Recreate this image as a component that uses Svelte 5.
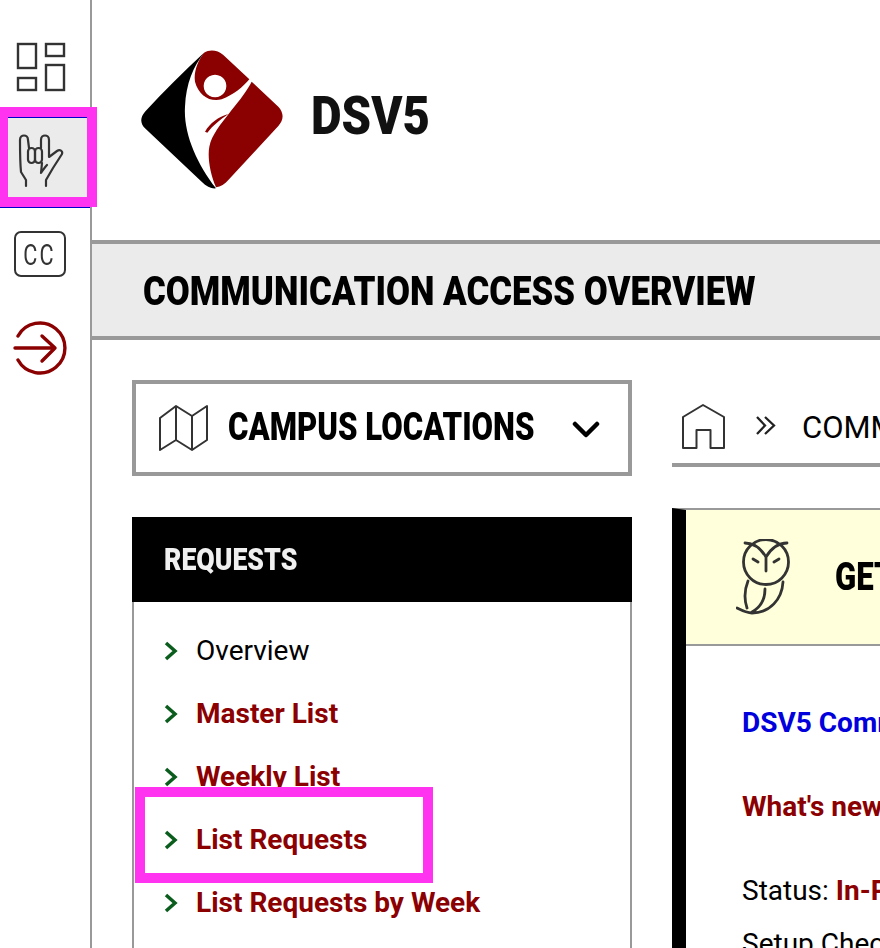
<script>
  const items = [
    { label: 'Overview', link: false },
    { label: 'Master List', link: true },
    { label: 'Weekly List', link: true },
    { label: 'List Requests', link: true, mark: true },
    { label: 'List Requests by Week', link: true },
  ];
</script>

<div class="page">
  <nav class="rail">
    <div class="rail-item first">
      <svg width="50" height="50" viewBox="0 0 50 50" fill="none" stroke="#333" stroke-width="2.400">
        <rect x="2" y="2" width="18" height="24"/><rect x="30" y="2" width="18" height="12"/>
        <rect x="2" y="36" width="18" height="12"/><rect x="30" y="23" width="18" height="25"/>
      </svg>
    </div>
    <div class="rail-item active">
      <svg width="50" height="60" viewBox="15 130 50 60" fill="none" stroke="#333" stroke-width="2.200" stroke-linecap="round" stroke-linejoin="round">
        <path d="M26 186v-6l-5-8c-1-10-1-22-1-32 0-6 8-6 8 0l1 8"/>
        <rect x="28" y="148" width="7" height="15" rx="3.500"/><rect x="35" y="148" width="7" height="15" rx="3.500"/>
        <path d="M41 148v-8c0-6 8-6 8 0v17l8-6c3-2 6 0 5 3l-9 14-7 12v6"/>
        <path d="M42 163l-1 10c2-3 4-6 6-8"/>
      </svg>
      <span class="mark rail-mark"></span>
    </div>
    <div class="rail-item cc">
      <div class="cc-box"><span class="cc-text">CC</span></div>
    </div>
    <div class="rail-item login">
      <svg width="56" height="56" viewBox="12 320 56 56" fill="none" stroke="#8b0000" stroke-width="3.400" stroke-linecap="round" stroke-linejoin="round">
        <path d="M18 336A25 25 0 1 1 18 360"/>
        <path d="M15 348h40M42 336l13 12-13 13"/>
      </svg>
    </div>
  </nav>

  <main class="main">
    <header class="brand">
      <svg class="logo" width="310" height="160" viewBox="0 0 930 480">
        <path fill="#000" d="M222 38C160 95 100 155 45 215c-15 17-15 35 0 50L215 425c15 15 30 22 43 20-58-75-98-165-93-245 3-70 25-120 57-162z"/>
        <path fill="#8b0000" fill-rule="evenodd" d="M222 38c18-10 40-8 58 7l78 73c-18 22-48 47-83 60-35 10-70-13-80-53-5-30 10-65 27-87zm33 66a34 34 0 1 0 .100 0z"/>
        <path fill="#8b0000" d="M365 125l80 75c17 18 17 40 0 58L295 420c-10 12-23 20-37 22-18-42-26-92-20-122 7-35 32-65 67-110 25-30 47-60 60-85z"/>
        <path fill="#8b0000" d="M225 275c15-25 40-45 70-53-25 18-45 33-63 56z"/>
      </svg>
      <span class="brand-name">DSV5</span>
    </header>

    <div class="title-bar"><h1>COMMUNICATION ACCESS OVERVIEW</h1></div>

    <div class="columns">
      <aside class="left">
        <div class="campus">
          <svg width="52" height="48" viewBox="0 0 52 48" fill="none" stroke="#333" stroke-width="2" stroke-linejoin="round">
            <path d="M2 14L18 2l16 10 15-10v34L34 46 18 36 2 46zM18 2v34M34 12v34"/>
          </svg>
          <span class="campus-label">CAMPUS LOCATIONS</span>
          <svg class="caret" width="28" height="18" viewBox="0 0 28 18" fill="none" stroke="#000" stroke-width="4.500" stroke-linecap="round" stroke-linejoin="round">
            <path d="M3 3l11 11L25 3"/>
          </svg>
        </div>
        <section class="panel">
          <h2><span>REQUESTS</span></h2>
          <ul>
            {#each items as item}
              <li class:link={item.link}>
                <svg width="16" height="20" viewBox="0 0 16 20" fill="none" stroke="#0b5d1e" stroke-width="3.500"><path d="M3 2l9 8-9 8"/></svg>
                <span>{item.label}</span>
                {#if item.mark}<span class="mark list-mark"></span>{/if}
              </li>
            {/each}
          </ul>
        </section>
      </aside>

      <section class="right">
        <div class="crumbs">
          <svg class="home" width="46" height="48" viewBox="680 403 46 48" fill="none" stroke="#333" stroke-width="2" stroke-linejoin="round">
            <path d="M683 418l20-12 21 12v31h-13.500v-18h-14v18H683z"/>
          </svg>
          <svg class="dbl" width="22" height="21" viewBox="755 415 22 21" fill="none" stroke="#222" stroke-width="2.300"><path d="M757 417l8 8.500-8 8.500M765 417l9 8.500-9 8.500"/></svg>
          <span class="crumb-text">COMMUNICATION ACCESS OVERVIEW</span>
        </div>
        <div class="card">
          <div class="card-head">
            <svg width="56" height="76" viewBox="736 540 56 76" fill="none" stroke="#333" stroke-width="2.800" stroke-linecap="round">
              <circle cx="766" cy="563" r="22.500"/>
              <path d="M745 544c7 0 15 4 21 14v14M787 544c-7 0-15 4-21 14M753 560l5 3M779 560l-5 3"/>
              <path d="M748 582c-4 10-4 18-1 27M765 590c0 10-4 18-13 23M783 583c-1 17-13 31-31 31-5 0-9-2-15-5"/>
            </svg>
            <span>GETTING STARTED</span>
          </div>
          <div class="card-body">
            <p class="blue">DSV5 Communication Access Guide</p>
            <p class="red">What's new in this release</p>
            <p class="status">Status: <b>In-Progress</b></p>
            <p class="plain">Setup Checklist</p>
          </div>
        </div>
      </section>
    </div>
  </main>
</div>

<style>
  :global(body) { margin: 0; background: #fff; }
  .page {
    display: flex; width: 880px; height: 948px; overflow: hidden;
    font-family: Roboto, sans-serif; color: #000;
  }
  svg { flex: none; display: block; }
  .rail { width: 90px; flex: none; border-right: 2px solid #999; }
  .rail-item { position: relative; display: flex; box-sizing: border-box; }
  .rail-item.first { height: 117px; padding: 42px 0 0 16px; }
  .rail-item.active {
    height: 91px; background: #ebebeb;
    border-top: 1px solid #00c; border-bottom: 1px solid #00c; padding: 12px 0 0 15px;
  }
  .mark { position: absolute; box-sizing: border-box; border-style: solid; border-color: #ff33f0; pointer-events: none; }
  .rail-mark { left: 0; top: -11px; width: 97px; height: 100px; border-width: 10px 10px 10px 8px; }
  .rail-item.cc { height: 92px; padding: 23px 0 0 14px; }
  .cc-box {
    width: 52px; height: 46px; box-sizing: border-box; border: 2px solid #333; border-radius: 7px;
    display: flex; align-items: center; justify-content: center;
  }
  .cc-text { font-size: 30px; color: #333; display: inline-block; transform: scaleX(.72); letter-spacing: 3px; }
  .rail-item.login { padding: 20px 0 0 12px; }

  .main { flex: 1; min-width: 0; }
  .brand { height: 240px; display: flex; align-items: flex-start; padding: 40px 0 0 38px; box-sizing: border-box; position: relative; }
  .brand .logo { filter: blur(.4px); }
  .brand-name {
    position: absolute; left: 219px; top: 84px; font-size: 54px; line-height: 64px; font-weight: 900; color: #111;
    display: inline-block; transform: scaleX(.875); transform-origin: left center; filter: blur(.4px);
  }
  .title-bar {
    height: 100px; box-sizing: border-box; background: #ebebeb;
    border-top: 4px solid #999; border-bottom: 4px solid #999;
    display: flex; align-items: center; padding-left: 51px;
  }
  h1 {
    margin: 2px 0 0; font-size: 40px; font-weight: 900; white-space: nowrap;
    transform: scaleX(.87); transform-origin: left center;
  }
  .columns { display: flex; gap: 40px; padding: 40px 0 0 40px; }
  .left { width: 500px; flex: none; }
  .campus {
    height: 96px; box-sizing: border-box; border: 4px solid #999;
    display: flex; align-items: center; padding-left: 22px; position: relative;
  }
  .campus-label {
    font-size: 38px; font-weight: 900; white-space: nowrap; margin-left: 18px; display: inline-block;
    transform: scaleX(.82); transform-origin: left center; line-height: 44px; margin-top: -2px;
  }
  .caret { position: absolute; right: 28px; top: 37px; }
  .panel { margin-top: 41px; border: 2px solid #999; border-top: 0; height: 500px; }
  h2 {
    margin: 0 -2px; height: 85px; background: #000; color: #f0f0f0; font-size: 31px; font-weight: 900;
    display: flex; align-items: center; padding-left: 32px;
  }
  h2 span { display: inline-block; transform: scaleX(.86); transform-origin: left center; }
  ul { list-style: none; margin: 0; padding: 17px 0 0 29px; }
  li {
    position: relative; height: 63px; display: flex; align-items: center; gap: 17px;
    font-size: 28px; white-space: nowrap;
  }
  li.link { color: #8b0000; font-weight: 700; }
  .list-mark { left: -28px; top: -21px; width: 298px; height: 96px; border-width: 10px; }

  .right { flex: 1; min-width: 0; }
  .crumbs {
    height: 87px; box-sizing: border-box; border-bottom: 4px solid #999;
    display: flex; align-items: center; padding: 8px 0 0 8px;
    font-size: 31px; white-space: nowrap; overflow: hidden;
  }
  .crumb-text { padding-top: 3px; }
  .dbl { margin: 0 25px 0 29px; }
  .card { margin-top: 41px; border-left: 14px solid #000; border-top: 2px solid #999; }
  .card-head {
    height: 136px; box-sizing: border-box; background: #ffffdc; border-bottom: 2px solid #999;
    display: flex; align-items: center; padding-left: 50px; gap: 43px;
    font-size: 38px; font-weight: 900; white-space: nowrap;
  }
  .card-head span { display: inline-block; transform: scaleX(.82); transform-origin: left center; }
  .card-body { padding: 0 0 0 56px; font-size: 28px; line-height: 33px; white-space: nowrap; }
  .card-body p { margin: 0; }
  .blue { color: #0000dd; font-weight: 700; padding-top: 60px; }
  .red { color: #8b0000; font-weight: 700; padding-top: 51px; }
  .status { padding-top: 51px; }
  .status b { color: #8b0000; }
  .plain { padding-top: 20px; }
</style>
